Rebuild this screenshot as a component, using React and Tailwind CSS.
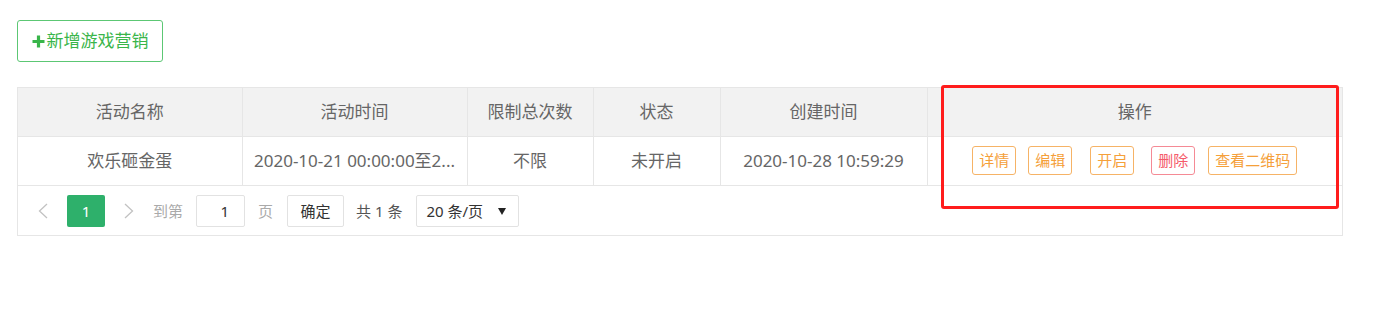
import React from "react";

const font = { fontFamily: '"Noto Sans", "Noto Sans CJK SC", sans-serif' };

const Chevron = ({ dir }) => (
  <svg width="10" height="16" viewBox="0 0 10 16" className="shrink-0">
    <polyline
      points={dir === "left" ? "9,1 1.5,8 9,15" : "1,1 8.5,8 1,15"}
      fill="none"
      stroke="#c2c2c2"
      strokeWidth="1.3"
    />
  </svg>
);

const ActionButton = ({ children, danger, className }) => (
  <button
    className={
      "h-[29px] px-[6px] rounded-[3px] border text-[15px] leading-none " +
      (danger ? "border-[#f58a95] text-[#f55b6a] " : "border-[#f6b366] text-[#f5a03a] ") +
      (className || "")
    }
  >
    {children}
  </button>
);

export default function App() {
  const headers = ["活动名称", "活动时间", "限制总次数", "状态", "创建时间", "操作"];

  return (
    <div className="relative w-[1373px] h-[318px] bg-white" style={font}>
      <div className="pl-[17px] pt-[20px]">
        <button className="h-[42px] w-[146px] border border-[#5cc774] rounded-[3px] text-[#39b54a] text-[17px] flex items-center justify-center">
          <svg width="13" height="13" viewBox="0 0 13 13" className="mr-[2px]">
            <path d="M6.5 0.5v12M0.5 6.5h12" stroke="#39b54a" strokeWidth="3.2" />
          </svg>
          新增游戏营销
        </button>

        <div className="mt-[25px] w-[1326px] border border-[#e6e6e6]">
          <table className="w-full table-fixed border-collapse text-[17px] text-[#666]">
            <colgroup>
              <col className="w-[224px]" />
              <col className="w-[225px]" />
              <col className="w-[126px]" />
              <col className="w-[127px]" />
              <col className="w-[207px]" />
              <col />
            </colgroup>
            <thead>
              <tr className="bg-[#f2f2f2] h-[48px]">
                {headers.map((h, i) => (
                  <th
                    key={h}
                    className={
                      "font-normal text-center border-b border-[#e6e6e6] " +
                      (i < 5 ? "border-r" : "")
                    }
                  >
                    {h}
                  </th>
                ))}
              </tr>
            </thead>
            <tbody>
              <tr className="h-[49px]">
                <td className="text-center border-r border-b border-[#e6e6e6]">欢乐砸金蛋</td>
                <td className="text-center border-r border-b border-[#e6e6e6] whitespace-nowrap">
                  2020-10-21 00:00:00至2...
                </td>
                <td className="text-center border-r border-b border-[#e6e6e6]">不限</td>
                <td className="text-center border-r border-b border-[#e6e6e6]">未开启</td>
                <td className="text-center border-r border-b border-[#e6e6e6]">2020-10-28 10:59:29</td>
                <td className="border-b border-[#e6e6e6]">
                  <div className="flex items-center justify-center">
                    <ActionButton>详情</ActionButton>
                    <ActionButton className="ml-[12px]">编辑</ActionButton>
                    <ActionButton className="ml-[18px]">开启</ActionButton>
                    <ActionButton danger className="ml-[17px]">删除</ActionButton>
                    <ActionButton className="ml-[13px]">查看二维码</ActionButton>
                  </div>
                </td>
              </tr>
            </tbody>
          </table>

          <div className="h-[49px] flex items-center pl-[20px] pt-[2px] text-[15px]">
            <Chevron dir="left" />
            <span className="ml-[19px] w-[38px] h-[32px] rounded-[2px] bg-[#2eb06b] text-white flex items-center justify-center">
              1
            </span>
            <span className="ml-[19px]">
              <Chevron dir="right" />
            </span>
            <span className="ml-[19px] text-[#aaa]">到第</span>
            <span className="ml-[13px] w-[49px] h-[32px] border border-[#e2e2e2] rounded-[2px] flex items-center justify-end pr-[15px] text-[#333]">
              1
            </span>
            <span className="ml-[13px] text-[#aaa]">页</span>
            <span className="ml-[14px] w-[57px] h-[32px] border border-[#e2e2e2] rounded-[2px] flex items-center justify-center text-[#333]">
              确定
            </span>
            <span className="ml-[12px] text-[#555]">共 1 条</span>
            <span className="ml-[14px] w-[103px] h-[32px] border border-[#e2e2e2] rounded-[2px] flex items-center justify-between pl-[9px] pr-[12px] text-[#333]">
              <span>20 条/页</span>
              <svg width="8" height="8" viewBox="0 0 8 8">
                <path d="M0 1h8L4 8z" fill="#222" />
              </svg>
            </span>
          </div>
        </div>
      </div>

      <div className="absolute left-[941px] top-[85px] w-[398px] h-[124px] border-[3px] border-[#ff1c1c] rounded-[3px]" />
    </div>
  );
}
